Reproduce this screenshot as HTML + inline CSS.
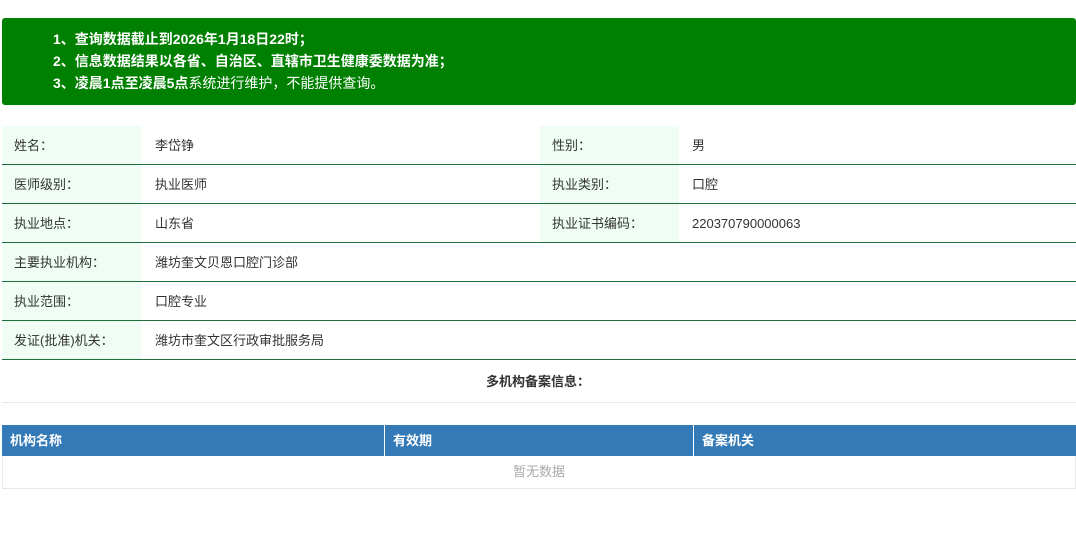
<!DOCTYPE html><html><head><meta charset="utf-8"><style>
body{margin:0;background:#fff;font-family:"Liberation Sans","Noto Sans CJK SC",sans-serif;font-size:13px;color:#333;width:1076px;height:539px;overflow:hidden;position:relative}
.ban{position:absolute;left:2px;top:18px;width:1074px;height:87px;background:#008000;border-radius:3px;color:#fff;font-size:14px}
.ban div{position:absolute;left:51px;white-space:nowrap}
b{font-weight:bold}
.row{position:absolute;left:2px;width:1074px;height:38px;border-bottom:1px solid #1f6f3f}
.c{position:absolute;top:1px;height:38px;line-height:38px}
.l{background:#effdf5;width:127px;padding-left:12px;top:0;line-height:40px}
.t{position:absolute;white-space:nowrap}
</style></head><body>
<div class="ban">
<div style="top:11px"><b>1、查询数据截止到2026年1月18日22时；</b></div>
<div style="top:33px"><b>2、信息数据结果以各省、自治区、直辖市卫生健康委数据为准；</b></div>
<div style="top:55px"><b>3、凌晨1点至凌晨5点</b>系统进行维护，不能提供查询。</div>
</div>
<div class="row" style="top:126px"><div class="c l" style="left:0">姓名：</div><div class="c" style="left:153px">李岱铮</div><div class="c l" style="left:538px">性别：</div><div class="c" style="left:690px">男</div></div>
<div class="row" style="top:165px"><div class="c l" style="left:0">医师级别：</div><div class="c" style="left:153px">执业医师</div><div class="c l" style="left:538px">执业类别：</div><div class="c" style="left:690px">口腔</div></div>
<div class="row" style="top:204px"><div class="c l" style="left:0">执业地点：</div><div class="c" style="left:153px">山东省</div><div class="c l" style="left:538px">执业证书编码：</div><div class="c" style="left:690px">220370790000063</div></div>
<div class="row" style="top:243px"><div class="c l" style="left:0">主要执业机构：</div><div class="c" style="left:153px">潍坊奎文贝恩口腔门诊部</div></div>
<div class="row" style="top:282px"><div class="c l" style="left:0">执业范围：</div><div class="c" style="left:153px">口腔专业</div></div>
<div class="row" style="top:321px"><div class="c l" style="left:0">发证(批准)机关：</div><div class="c" style="left:153px">潍坊市奎文区行政审批服务局</div></div>
<div class="t" style="top:371px;left:0;width:1076px;text-align:center;font-weight:bold">多机构备案信息：</div>
<div style="position:absolute;left:2px;top:402px;width:1074px;height:1px;background:#e8e8e8"></div>
<div style="position:absolute;left:2px;top:425px;width:1074px;height:31px;background:#337ab7;color:#fff;font-weight:bold;line-height:31px">
<span class="t" style="left:8px">机构名称</span><span class="t" style="left:391px">有效期</span><span class="t" style="left:700px">备案机关</span>
<div style="position:absolute;left:382px;top:0;width:1px;height:31px;background:#fff"></div>
<div style="position:absolute;left:691px;top:0;width:1px;height:31px;background:#fff"></div>
</div>
<div style="position:absolute;left:2px;top:456px;width:1072px;height:32px;border:1px solid #e8e8e8;border-top:0;line-height:32px;text-align:center;color:#aaa">暂无数据</div>
</body></html>
